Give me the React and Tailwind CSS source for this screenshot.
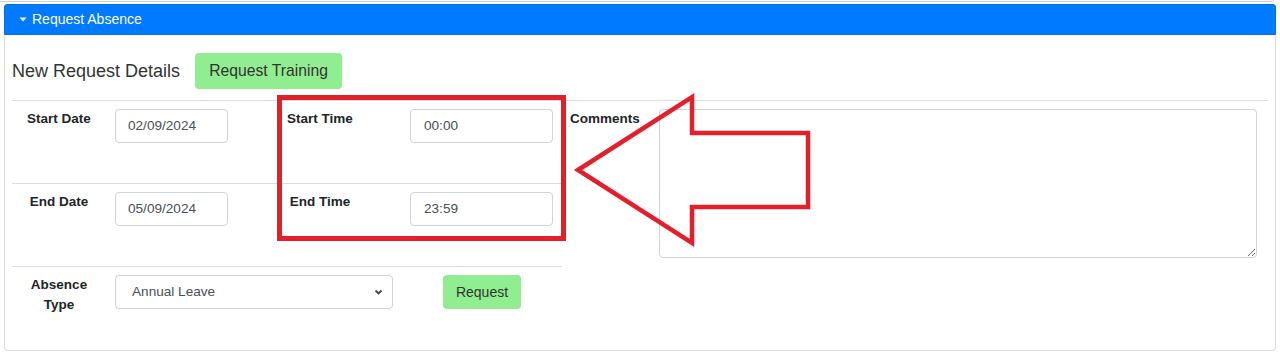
import React from "react";

export default function App() {
  const font = { fontFamily: '"Liberation Sans", Arial, sans-serif' };
  return (
    <div className="relative w-full h-[358px] bg-white overflow-hidden" style={font}>
      <div className="h-[2px] mr-[6px] border-b border-r border-[#d0d0d0] rounded-br-[3px]" />
      <div className="mx-[4px] mt-[2px]">
        <div className="h-[31px] bg-[#007bff] border border-[#0a6fe0] rounded-t-[3px] flex items-center pl-[14px] text-white text-[14px]">
          <svg width="8" height="5" viewBox="0 0 8 5" className="mr-[5px]">
            <polygon points="0.5,0.5 7.5,0.5 4,4.5" fill="white" />
          </svg>
          <span>Request Absence</span>
        </div>
        <div className="h-[316px] border-x border-b border-[#dcdcdc] rounded-b-[4px] px-[7px]">
          <div className="flex items-center pt-[18px] pb-[11px]">
            <span className="text-[18px] text-[#333]">New Request Details</span>
            <button className="ml-[15px] w-[147px] h-[36px] rounded-[4px] bg-[#90ee90] text-[15.7px] text-[#333]">
              Request Training
            </button>
          </div>
          <div className="flex border-t border-[#dcdcdc]">
            <div className="w-[550px] flex flex-col">
              <div className="h-[83px] border-b border-[#dcdcdc] flex items-start pt-[8px]">
                <div className="w-[94px] text-center font-bold text-[13.5px] leading-[20px] text-[#212529]">Start Date</div>
                <div className="ml-[9px] w-[113px] h-[34px] border border-[#ced4da] rounded-[4px] px-[12px] flex items-center text-[13.6px] text-[#495057]">02/09/2024</div>
                <div className="ml-[45px] w-[94px] text-center font-bold text-[13.5px] leading-[20px] text-[#212529]">Start Time</div>
                <div className="ml-[43px] w-[143px] h-[34px] border border-[#ced4da] rounded-[4px] px-[13px] flex items-center text-[13.6px] text-[#495057]">00:00</div>
              </div>
              <div className="h-[83px] border-b border-[#dcdcdc] flex items-start pt-[8px]">
                <div className="w-[94px] text-center font-bold text-[13.5px] leading-[20px] text-[#212529]">End Date</div>
                <div className="ml-[9px] w-[113px] h-[34px] border border-[#ced4da] rounded-[4px] px-[12px] flex items-center text-[13.6px] text-[#495057]">05/09/2024</div>
                <div className="ml-[45px] w-[94px] text-center font-bold text-[13.5px] leading-[20px] text-[#212529]">End Time</div>
                <div className="ml-[43px] w-[143px] h-[34px] border border-[#ced4da] rounded-[4px] px-[13px] flex items-center text-[13.6px] text-[#495057]">23:59</div>
              </div>
              <div className="flex items-start pt-[8px]">
                <div className="w-[94px] text-center font-bold text-[13.5px] leading-[20px] text-[#212529]">
                  Absence<br />Type
                </div>
                <div className="ml-[9px] w-[278px] h-[34px] border border-[#ced4da] rounded-[4px] pl-[16px] pr-[9px] flex items-center justify-between text-[13.6px] text-[#495057]">
                  <span>Annual Leave</span>
                  <svg width="9" height="6" viewBox="0 0 9 6">
                    <path d="M1.5 1.5 L4.5 4.5 L7.5 1.5" fill="none" stroke="#444" strokeWidth="1.8" />
                  </svg>
                </div>
                <button className="ml-[50px] w-[78px] h-[34px] rounded-[4px] bg-[#90ee90] text-[14px] text-[#333]">
                  Request
                </button>
              </div>
            </div>
            <div className="flex-1 flex items-start pt-[8px]">
              <div className="w-[86px] text-center font-bold text-[13.5px] leading-[20px] text-[#212529]">Comments</div>
              <textarea className="ml-[11px] w-[598px] h-[149px] border border-[#ced4da] rounded-[4px] outline-none" />
            </div>
          </div>
        </div>
      </div>
      <div className="absolute left-[277px] top-[95px] w-[289px] h-[146px] border-[5px] border-[#e3202a] pointer-events-none" />
      <svg className="absolute left-0 top-0 pointer-events-none" width="1280" height="358" viewBox="0 0 1280 358">
        <polygon
          points="578,170 692,97 692,133 808,133 808,207 692,207 692,243"
          fill="none"
          stroke="#e3202a"
          strokeWidth="4.5"
          strokeLinejoin="miter"
        />
      </svg>
    </div>
  );
}
